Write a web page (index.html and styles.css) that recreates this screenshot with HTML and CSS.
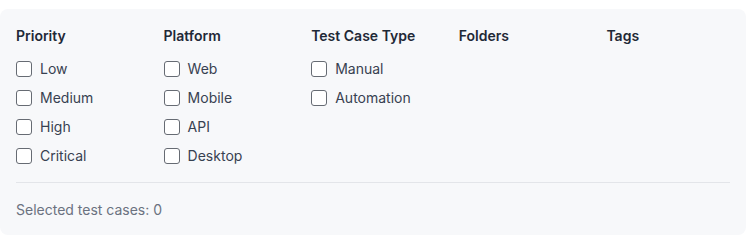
FILE: index.html
```html
<!DOCTYPE html>
<html lang="en">
<head>
<meta charset="utf-8">
<title>Filters</title>
<link rel="stylesheet" href="styles.css">
</head>
<body>
<div class="card">
  <div class="grid">
    <div class="col">
      <div class="col-title">Priority</div>
      <div class="opts">
        <label class="opt"><span class="box"></span><span>Low</span></label>
        <label class="opt"><span class="box"></span><span>Medium</span></label>
        <label class="opt"><span class="box"></span><span>High</span></label>
        <label class="opt"><span class="box"></span><span>Critical</span></label>
      </div>
    </div>
    <div class="col">
      <div class="col-title">Platform</div>
      <div class="opts">
        <label class="opt"><span class="box"></span><span>Web</span></label>
        <label class="opt"><span class="box"></span><span>Mobile</span></label>
        <label class="opt"><span class="box"></span><span>API</span></label>
        <label class="opt"><span class="box"></span><span>Desktop</span></label>
      </div>
    </div>
    <div class="col">
      <div class="col-title">Test Case Type</div>
      <div class="opts">
        <label class="opt"><span class="box"></span><span>Manual</span></label>
        <label class="opt"><span class="box"></span><span>Automation</span></label>
      </div>
    </div>
    <div class="col">
      <div class="col-title">Folders</div>
    </div>
    <div class="col">
      <div class="col-title">Tags</div>
    </div>
  </div>
  <div class="footer">Selected test cases: 0</div>
</div>
</body>
</html>
```
FILE: styles.css
```css
* { box-sizing: border-box; }
html, body { margin: 0; background: #ffffff; }
body {
  padding-top: 9px;
  font-family: Inter, "Noto Sans", "Liberation Sans", sans-serif;
  font-size: 14px;
  line-height: 20px;
}
.card {
  width: 746px;
  height: 226px;
  background: #f7f8fa;
  border-radius: 8px;
  padding: 17px 16px 15px;
}
.grid {
  display: grid;
  grid-template-columns: repeat(5, 1fr);
  column-gap: 24px;
  padding-bottom: 16px;
  border-bottom: 1px solid #e3e5e9;
}
.col-title {
  font-weight: 600;
  color: #1f2937;
  margin-bottom: 13px;
}
.opts {
  display: flex;
  flex-direction: column;
  gap: 9px;
}
.opt {
  display: flex;
  align-items: center;
  gap: 8px;
  color: #374151;
}
.box {
  width: 16px;
  height: 16px;
  border: 1px solid #666b73;
  border-radius: 3px;
  background: #ffffff;
  flex: none;
}
.footer {
  padding-top: 17px;
  color: #6b7280;
  font-size: 14px;
}
```
